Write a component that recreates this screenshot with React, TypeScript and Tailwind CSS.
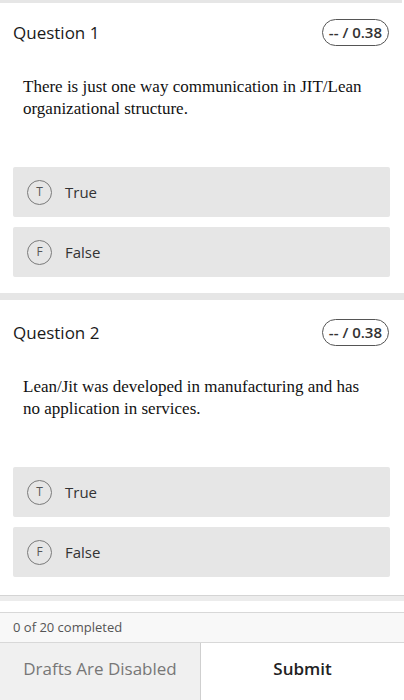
import React from "react";

const sans = { fontFamily: '"Open Sans", "Noto Sans", sans-serif' };
const serif = { fontFamily: '"Liberation Serif", "Times New Roman", serif' };

function Option({ letter, label }: { letter: string; label: string }) {
  return (
    <div className="h-[50px] bg-[#e6e6e6] rounded-[2px] flex items-center pl-[14px]">
      <div className="w-[25px] h-[25px] rounded-full border border-[#7a7a7a] flex items-center justify-center text-[12px] text-[#555] leading-none">
        {letter}
      </div>
      <span className="ml-[13px] text-[15px] text-[#333]">{label}</span>
    </div>
  );
}

function Question({ n, text, pt, pb }: { n: number; text: string; pt: string; pb: string }) {
  return (
    <div className={`px-[13px] pr-[14px] ${pt} ${pb}`}>
      <div className="flex items-center justify-between h-[27px]">
        <span className="text-[17px] text-[#1a1a1a] font-medium">Question {n}</span>
        <span className="h-[27px] px-[6px] rounded-full border border-[#555] flex items-center text-[15px] font-semibold text-[#333] mr-[1px]">
          -- / 0.38
        </span>
      </div>
      <p style={serif} className="mt-[30px] pl-[10px] pr-[20px] text-[17px] leading-[22px] text-[#111]">
        {text}
      </p>
      <div className="mt-[47px] flex flex-col gap-[10px]">
        <Option letter="T" label="True" />
        <Option letter="F" label="False" />
      </div>
    </div>
  );
}

export default function App() {
  return (
    <div style={sans} className="w-[404px] h-[700px] bg-white overflow-hidden flex flex-col">
      <div className="h-[3px] bg-[#e6e6e6] mr-[2px]" />
      <Question
        n={1}
        pt="pt-[16px]"
        pb="pb-[16px]"
        text="There is just one way communication in JIT/Lean organizational structure."
      />
      <div className="h-[7px] bg-[#e6e6e6]" />
      <Question
        n={2}
        pt="pt-[19px]"
        pb="pb-[18px]"
        text="Lean/Jit was developed in manufacturing and has no application in services."
      />
      <div className="border-t border-[#d4d4d4] h-[6px] bg-[#ececec]" />
      <div className="h-[11px]" />
      <div className="border-t border-[#d8d8d8] h-[30px] bg-[#f8f8f8] flex items-center px-[13px] text-[13px] text-[#555]">
        0 of 20 completed
      </div>
      <div className="flex-1 flex border-t border-[#d8d8d8]">
        <div className="w-[201px] bg-[#f0f0f0] border-r border-[#cfcfcf] flex items-center justify-center pb-[6px] text-[17px] text-[#777]">
          Drafts Are Disabled
        </div>
        <div className="flex-1 bg-white flex items-center justify-center pb-[6px] text-[17px] font-semibold text-[#222]">
          Submit
        </div>
      </div>
    </div>
  );
}
